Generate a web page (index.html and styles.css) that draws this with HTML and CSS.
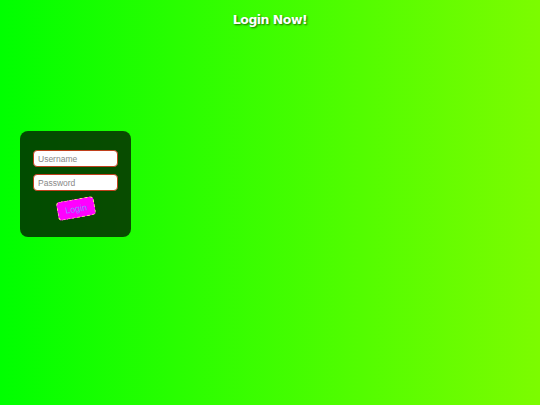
FILE: index.html
```html
<!DOCTYPE html>
<html>
<head>
<meta charset="utf-8">
<link rel="stylesheet" href="styles.css">
</head>
<body>
<h1 class="title">Login Now!</h1>
<div class="wrap">
  <form class="card">
    <input class="field" type="text" placeholder="Username">
    <input class="field" type="password" placeholder="Password">
    <div class="actions">
      <button class="btn" type="button">Login</button>
    </div>
  </form>
</div>
</body>
</html>
```
FILE: styles.css
```css
html, body {
  margin: 0;
  padding: 0;
}
body {
  width: 540px;
  height: 405px;
  background: linear-gradient(to right, #00ff00, #7cfc00);
  font-family: "Liberation Sans", Arial, sans-serif;
  overflow: hidden;
}
.title {
  margin: 0;
  padding-top: 11px;
  text-align: center;
  color: #ffffff;
  font-family: "DejaVu Sans", sans-serif;
  font-size: 12.5px;
  font-weight: bold;
  line-height: 18px;
  letter-spacing: -0.5px;
  text-shadow: 1px 1px 2px rgba(0,0,0,0.6);
}
.wrap {
  padding-left: 20px;
  margin-top: 102px;
}
.card {
  width: 111px;
  height: 106px;
  box-sizing: border-box;
  background: rgba(0, 0, 0, 0.7);
  border-radius: 8px;
  padding: 19px 12px 0 13px;
  display: flex;
  flex-direction: column;
  gap: 7px;
}
.field {
  width: 85px;
  height: 17px;
  box-sizing: border-box;
  margin: 0;
  border: 1.5px solid #c0401c;
  border-radius: 4px;
  background: #ffffff;
  padding: 0 4px;
  font-family: "Liberation Sans", Arial, sans-serif;
  font-size: 8.5px;
  color: #333;
}
.field::placeholder {
  color: #888888;
}
.actions {
  display: flex;
  justify-content: center;
  padding-top: 1px;
  padding-right: 1px;
}
.btn {
  width: 38px;
  height: 19px;
  box-sizing: border-box;
  padding: 0;
  background: #ff00ff;
  border: 1.5px dashed #f4e08a;
  border-radius: 4px;
  color: #8a8cff;
  font-family: "Liberation Sans", Arial, sans-serif;
  font-size: 9px;
  transform: rotate(-10deg);
}
```
